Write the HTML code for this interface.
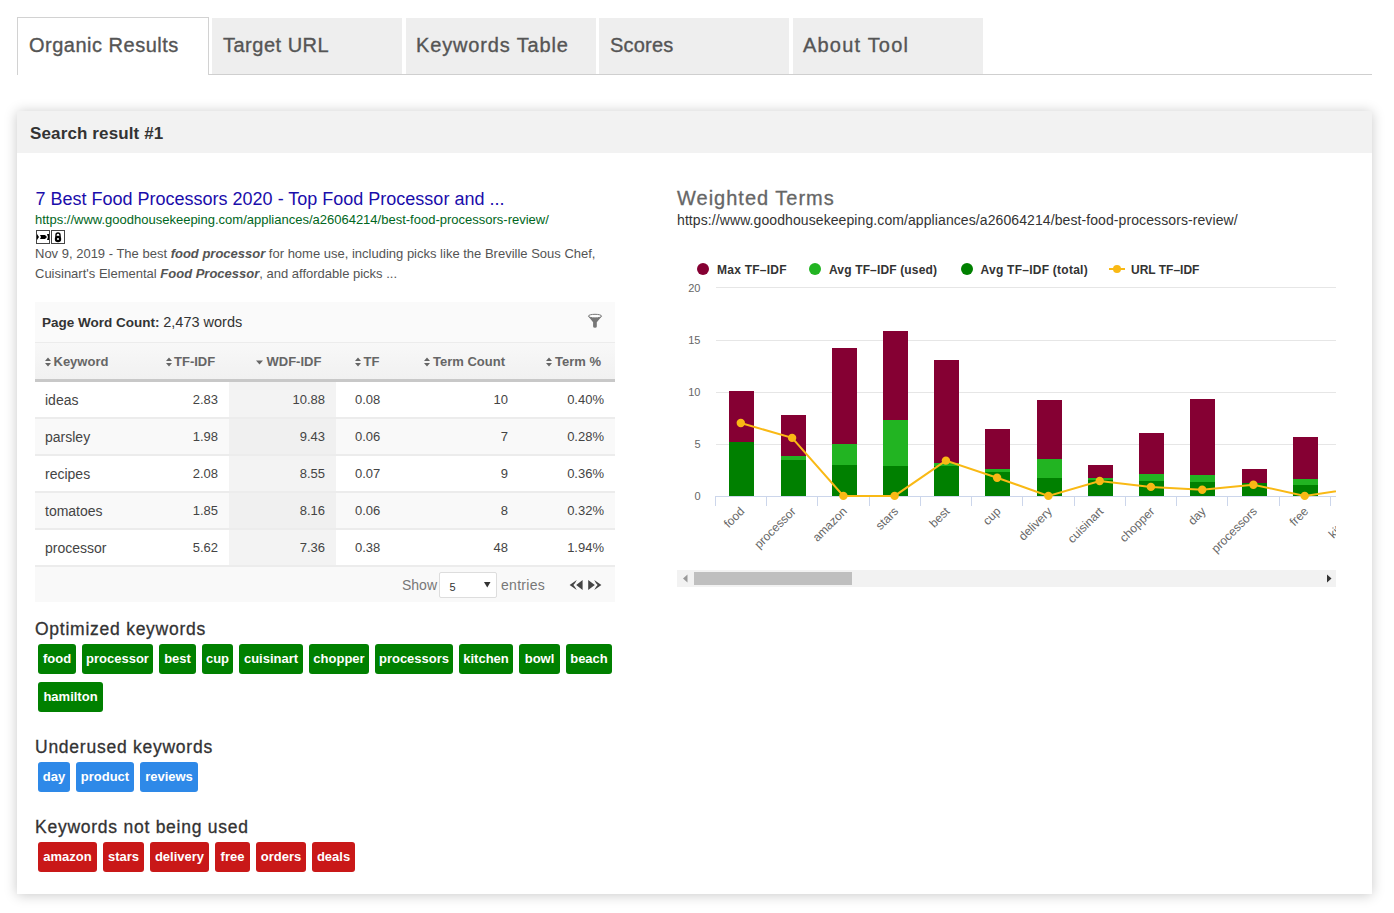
<!DOCTYPE html>
<html><head><meta charset="utf-8">
<style>
html,body{margin:0;padding:0;background:#fff;width:1394px;height:913px;overflow:hidden;}
body{font-family:"Liberation Sans",sans-serif;position:relative;color:#333;}
.a{position:absolute;white-space:nowrap;}
.tab{position:absolute;top:18px;height:56px;background:#eee;}
.tabt{position:absolute;top:31px;font-size:20px;line-height:28px;color:#555;letter-spacing:0.5px;-webkit-text-stroke:0.35px #555;}
#panel{position:absolute;left:17px;top:111px;width:1355px;height:783px;background:#fff;box-shadow:0 1px 12px rgba(0,0,0,0.22);}
#phead{position:absolute;left:0;top:0;width:1355px;height:42px;background:#f2f2f2;}
.t13{font-size:13px;line-height:16px;}
.th{position:absolute;top:355px;font-size:13px;line-height:14px;font-weight:bold;color:#666;}
.cell{position:absolute;font-size:13px;line-height:14px;color:#444;}
.r{text-align:right;}
.tag{position:absolute;height:30px;border-radius:3px;color:#fff;font-weight:bold;font-size:13px;line-height:30px;text-align:center;}
.g{background:#008000;}
.b{background:#2e89e8;}
.rd{background:#c91818;}
.h3{position:absolute;font-size:17.5px;line-height:20px;color:#333;letter-spacing:0.75px;-webkit-text-stroke:0.3px #333;}
</style></head>
<body>
<!-- tabs -->
<div class="a" style="left:17px;top:74px;width:1355px;height:1px;background:#cfcfcf"></div>
<div class="a" style="left:17px;top:17px;width:190px;height:57px;border:1px solid #d2d2d2;border-bottom:0;background:#fff"></div>
<div class="tab" style="left:212px;width:190px"></div>
<div class="tab" style="left:406px;width:190px"></div>
<div class="tab" style="left:599px;width:190px"></div>
<div class="tab" style="left:793px;width:190px"></div>
<div class="a tabt" style="left:29px">Organic Results</div>
<div class="a tabt" style="left:223px">Target URL</div>
<div class="a tabt" style="left:416px;letter-spacing:0.85px">Keywords Table</div>
<div class="a tabt" style="left:610px;letter-spacing:0.2px">Scores</div>
<div class="a tabt" style="left:803px;letter-spacing:1.2px">About Tool</div>

<div id="panel">
  <div id="phead"></div>
</div>
<div class="a" style="left:30px;top:124px;font-size:17px;line-height:20px;font-weight:bold;color:#333;letter-spacing:0.13px">Search result #1</div>

<!-- search result -->
<div class="a" style="left:35.5px;top:188px;font-size:18px;line-height:22px;color:#1a0dab">7 Best Food Processors 2020 - Top Food Processor and ...</div>
<div class="a" style="left:35px;top:212px;font-size:13px;line-height:16px;color:#006621">https://www.goodhousekeeping.com/appliances/a26064214/best-food-processors-review/</div>
<svg class="a" style="left:35px;top:230px" width="31" height="15" viewBox="0 0 31 15">
 <rect x="1.5" y="0.5" width="13" height="13" fill="#fff" stroke="#444" stroke-width="1"/>
 <rect x="16.5" y="0.5" width="13" height="13" fill="#fff" stroke="#444" stroke-width="1"/>
 <path d="M2 4 L4 7 L2 10 Z M5 5 L10 5 L12 7 L10 9 L5 9 L6 7 Z M12 4 L14 4 L14 10 L12 10 L13 7 Z" fill="#000"/>
 <circle cx="23" cy="9" r="3.2" fill="#000"/>
 <path d="M21 7 L21 5 A2 2 0 0 1 25 5 L25 7" fill="none" stroke="#000" stroke-width="1.4"/>
 <circle cx="23" cy="9" r="1" fill="#fff"/>
</svg>
<div class="a" style="left:35px;top:244px;font-size:13px;line-height:20px;color:#545454;white-space:normal;width:600px">Nov 9, 2019 - The best <b><i>food processor</i></b> for home use, including picks like the Breville Sous Chef,<br>Cuisinart's Elemental <b><i>Food Processor</i></b>, and affordable picks ...</div>

<!-- table -->
<div class="a" style="left:35px;top:302px;width:580px;height:40px;background:#fafafa"></div>
<div class="a" style="left:42px;top:314px;font-size:13.5px;line-height:16px;color:#333"><b>Page Word Count:</b> <span style="font-size:14.5px">2,473 words</span></div>
<svg class="a" style="left:587px;top:313px" width="16" height="16" viewBox="0 0 16 16">
 <path d="M1 3 Q8 7 15 3 L9.8 9.2 L9.8 13.4 Q9.8 14.7 8 14.7 Q6.1 14.7 6.1 13.4 L6.1 9.2 Z" fill="#777"/>
 <ellipse cx="8" cy="3.1" rx="6.6" ry="1.8" fill="#fff" stroke="#777" stroke-width="1"/>
</svg>
<div class="a" style="left:35px;top:342px;width:580px;height:1px;background:#ececec"></div>
<div class="a" style="left:35px;top:343px;width:580px;height:36px;background:linear-gradient(#f8f8f8,#f1f1f1)"></div>
<div class="a" style="left:35px;top:379px;width:580px;height:3px;background:#c8c8c8"></div>

<div class="a" style="left:35px;top:382px;width:580px;height:35px;background:#fff"></div>
<div class="a" style="left:229px;top:382px;width:107px;height:35px;background:#f3f3f3"></div>
<div class="a" style="left:35px;top:417px;width:580px;height:2px;background:#ececec"></div>
<div class="cell" style="left:45px;top:393px;font-size:14px">ideas</div>
<div class="cell r" style="left:118px;width:100px;top:393px">2.83</div>
<div class="cell r" style="left:225px;width:100px;top:393px">10.88</div>
<div class="cell" style="left:355px;top:393px">0.08</div>
<div class="cell r" style="left:408px;width:100px;top:393px">10</div>
<div class="cell r" style="left:504px;width:100px;top:393px">0.40%</div>
<div class="a" style="left:35px;top:419px;width:580px;height:35px;background:#f9f9f9"></div>
<div class="a" style="left:229px;top:419px;width:107px;height:35px;background:#f0f0f0"></div>
<div class="a" style="left:35px;top:454px;width:580px;height:2px;background:#ececec"></div>
<div class="cell" style="left:45px;top:430px;font-size:14px">parsley</div>
<div class="cell r" style="left:118px;width:100px;top:430px">1.98</div>
<div class="cell r" style="left:225px;width:100px;top:430px">9.43</div>
<div class="cell" style="left:355px;top:430px">0.06</div>
<div class="cell r" style="left:408px;width:100px;top:430px">7</div>
<div class="cell r" style="left:504px;width:100px;top:430px">0.28%</div>
<div class="a" style="left:35px;top:456px;width:580px;height:35px;background:#fff"></div>
<div class="a" style="left:229px;top:456px;width:107px;height:35px;background:#f3f3f3"></div>
<div class="a" style="left:35px;top:491px;width:580px;height:2px;background:#ececec"></div>
<div class="cell" style="left:45px;top:467px;font-size:14px">recipes</div>
<div class="cell r" style="left:118px;width:100px;top:467px">2.08</div>
<div class="cell r" style="left:225px;width:100px;top:467px">8.55</div>
<div class="cell" style="left:355px;top:467px">0.07</div>
<div class="cell r" style="left:408px;width:100px;top:467px">9</div>
<div class="cell r" style="left:504px;width:100px;top:467px">0.36%</div>
<div class="a" style="left:35px;top:493px;width:580px;height:35px;background:#f9f9f9"></div>
<div class="a" style="left:229px;top:493px;width:107px;height:35px;background:#f0f0f0"></div>
<div class="a" style="left:35px;top:528px;width:580px;height:2px;background:#ececec"></div>
<div class="cell" style="left:45px;top:504px;font-size:14px">tomatoes</div>
<div class="cell r" style="left:118px;width:100px;top:504px">1.85</div>
<div class="cell r" style="left:225px;width:100px;top:504px">8.16</div>
<div class="cell" style="left:355px;top:504px">0.06</div>
<div class="cell r" style="left:408px;width:100px;top:504px">8</div>
<div class="cell r" style="left:504px;width:100px;top:504px">0.32%</div>
<div class="a" style="left:35px;top:530px;width:580px;height:35px;background:#fff"></div>
<div class="a" style="left:229px;top:530px;width:107px;height:35px;background:#f3f3f3"></div>
<div class="a" style="left:35px;top:565px;width:580px;height:2px;background:#ececec"></div>
<div class="cell" style="left:45px;top:541px;font-size:14px">processor</div>
<div class="cell r" style="left:118px;width:100px;top:541px">5.62</div>
<div class="cell r" style="left:225px;width:100px;top:541px">7.36</div>
<div class="cell" style="left:355px;top:541px">0.38</div>
<div class="cell r" style="left:408px;width:100px;top:541px">48</div>
<div class="cell r" style="left:504px;width:100px;top:541px">1.94%</div>
<div class="a" style="left:35px;top:567px;width:580px;height:35px;background:#f9f9f9"></div>
<div class="cell" style="left:402px;top:578px;color:#777;font-size:14px">Show</div>
<div class="a" style="left:439px;top:572px;width:56px;height:24px;border:1px solid #ddd;border-radius:2px;background:#fff"></div>
<div class="cell" style="left:449.5px;top:580px;font-size:11px;color:#333">5</div>
<svg class="a" style="left:484px;top:581px" width="7" height="7"><path d="M0 1 L6.5 1 L3.25 6.5 Z" fill="#333"/></svg>
<div class="cell" style="left:501px;top:578px;color:#777;font-size:14px;letter-spacing:0.3px">entries</div>
<svg class="a" style="left:569px;top:580px" width="33" height="11" viewBox="0 0 33 11"><path d="M0.6 5 L7.8 0 Q6.6 2.6 4.4 5 Q6.6 7.4 7.8 10 Z M7.2 5 L13.6 0 L13.6 10 Z" fill="#444"/><path d="M19.2 0 L25.8 5 L19.2 10 Z M25.2 0 L32.4 5 L25.2 10 Q26.4 7.4 28.6 5 Q26.4 2.6 25.2 0 Z" fill="#444"/></svg>
<svg class="a" style="left:44.7px;top:357px" width="6" height="10" viewBox="0 0 6 10"><path d="M0 4 L3 0.5 L6 4 Z M0 6 L3 9.5 L6 6 Z" fill="#666"/></svg>
<div class="th" style="left:53.5px">Keyword</div>
<svg class="a" style="left:165.5px;top:357px" width="6" height="10" viewBox="0 0 6 10"><path d="M0 4 L3 0.5 L6 4 Z M0 6 L3 9.5 L6 6 Z" fill="#666"/></svg>
<div class="th" style="left:174px">TF-IDF</div>
<div class="th" style="left:266.5px">WDF-IDF</div>
<svg class="a" style="left:354.8px;top:357px" width="6" height="10" viewBox="0 0 6 10"><path d="M0 4 L3 0.5 L6 4 Z M0 6 L3 9.5 L6 6 Z" fill="#666"/></svg>
<div class="th" style="left:363.5px">TF</div>
<svg class="a" style="left:423.7px;top:357px" width="6" height="10" viewBox="0 0 6 10"><path d="M0 4 L3 0.5 L6 4 Z M0 6 L3 9.5 L6 6 Z" fill="#666"/></svg>
<div class="th" style="left:433px">Term Count</div>
<svg class="a" style="left:545.8px;top:357px" width="6" height="10" viewBox="0 0 6 10"><path d="M0 4 L3 0.5 L6 4 Z M0 6 L3 9.5 L6 6 Z" fill="#666"/></svg>
<div class="th" style="left:555px">Term %</div>
<svg class="a" style="left:256px;top:360px" width="7" height="5"><path d="M0 0.5 L7 0.5 L3.5 4.5 Z" fill="#666"/></svg>
<div class="h3" style="left:35px;top:619px">Optimized keywords</div>
<div class="tag g" style="left:38px;top:644px;width:38px">food</div>
<div class="tag g" style="left:82px;top:644px;width:71px">processor</div>
<div class="tag g" style="left:159px;top:644px;width:37px">best</div>
<div class="tag g" style="left:202px;top:644px;width:31px">cup</div>
<div class="tag g" style="left:239px;top:644px;width:64px">cuisinart</div>
<div class="tag g" style="left:309px;top:644px;width:60px">chopper</div>
<div class="tag g" style="left:375px;top:644px;width:78px">processors</div>
<div class="tag g" style="left:459px;top:644px;width:54px">kitchen</div>
<div class="tag g" style="left:519px;top:644px;width:41px">bowl</div>
<div class="tag g" style="left:566px;top:644px;width:46px">beach</div>
<div class="tag g" style="left:38px;top:682px;width:65px">hamilton</div>
<div class="h3" style="left:35px;top:737px">Underused keywords</div>
<div class="tag b" style="left:38px;top:762px;width:32px">day</div>
<div class="tag b" style="left:76px;top:762px;width:58px">product</div>
<div class="tag b" style="left:140px;top:762px;width:58px">reviews</div>
<div class="h3" style="left:35px;top:817px">Keywords not being used</div>
<div class="tag rd" style="left:38px;top:842px;width:59px">amazon</div>
<div class="tag rd" style="left:103px;top:842px;width:41px">stars</div>
<div class="tag rd" style="left:150px;top:842px;width:59px">delivery</div>
<div class="tag rd" style="left:215px;top:842px;width:35px">free</div>
<div class="tag rd" style="left:256px;top:842px;width:50px">orders</div>
<div class="tag rd" style="left:312px;top:842px;width:43px">deals</div>
<div class="a" style="left:677px;top:186px;font-size:20px;line-height:24px;color:#666;letter-spacing:1px;-webkit-text-stroke:0.3px #666">Weighted Terms</div>
<div class="a" style="left:677px;top:212px;font-size:14px;line-height:16px;color:#333;letter-spacing:0.09px">https://www.goodhousekeeping.com/appliances/a26064214/best-food-processors-review/</div>
<svg class="a" style="left:0;top:0" width="1394" height="913" viewBox="0 0 1394 913"><circle cx="703" cy="269" r="6" fill="#850033"/><circle cx="815" cy="269" r="6" fill="#22b422"/><circle cx="967" cy="269" r="6" fill="#008000"/><path d="M1109 269 L1125 269" stroke="#f9b915" stroke-width="2"/><circle cx="1117" cy="269" r="4" fill="#f9b915"/><text x="717" y="274" font-family="Liberation Sans" font-size="12" font-weight="bold" fill="#333" letter-spacing="0.25">Max TF–IDF</text><text x="829" y="274" font-family="Liberation Sans" font-size="12" font-weight="bold" fill="#333" letter-spacing="0.15">Avg TF–IDF (used)</text><text x="980.5" y="274" font-family="Liberation Sans" font-size="12" font-weight="bold" fill="#333" letter-spacing="0.25">Avg TF–IDF (total)</text><text x="1131" y="274" font-family="Liberation Sans" font-size="12" font-weight="bold" fill="#333">URL TF–IDF</text><rect x="716" y="287" width="620" height="1" fill="#e6e6e6"/><text x="700.5" y="292" text-anchor="end" font-family="Liberation Sans" font-size="11" fill="#666">20</text><rect x="716" y="340" width="620" height="1" fill="#e6e6e6"/><text x="700.5" y="344" text-anchor="end" font-family="Liberation Sans" font-size="11" fill="#666">15</text><rect x="716" y="392" width="620" height="1" fill="#e6e6e6"/><text x="700.5" y="396" text-anchor="end" font-family="Liberation Sans" font-size="11" fill="#666">10</text><rect x="716" y="444" width="620" height="1" fill="#e6e6e6"/><text x="700.5" y="448" text-anchor="end" font-family="Liberation Sans" font-size="11" fill="#666">5</text><text x="700.5" y="500" text-anchor="end" font-family="Liberation Sans" font-size="11" fill="#666">0</text><rect x="729" y="391" width="25" height="51" fill="#850033"/><rect x="729" y="442" width="25" height="54" fill="#008000"/><rect x="781" y="415" width="25" height="41" fill="#850033"/><rect x="781" y="456" width="25" height="4" fill="#22b422"/><rect x="781" y="460" width="25" height="36" fill="#008000"/><rect x="832" y="348" width="25" height="96" fill="#850033"/><rect x="832" y="444" width="25" height="21" fill="#22b422"/><rect x="832" y="465" width="25" height="31" fill="#008000"/><rect x="883" y="331" width="25" height="89" fill="#850033"/><rect x="883" y="420" width="25" height="46" fill="#22b422"/><rect x="883" y="466" width="25" height="30" fill="#008000"/><rect x="934" y="360" width="25" height="103" fill="#850033"/><rect x="934" y="463" width="25" height="3" fill="#22b422"/><rect x="934" y="466" width="25" height="30" fill="#008000"/><rect x="985" y="429" width="25" height="40" fill="#850033"/><rect x="985" y="469" width="25" height="3" fill="#22b422"/><rect x="985" y="472" width="25" height="24" fill="#008000"/><rect x="1037" y="400" width="25" height="59" fill="#850033"/><rect x="1037" y="459" width="25" height="19" fill="#22b422"/><rect x="1037" y="478" width="25" height="18" fill="#008000"/><rect x="1088" y="465" width="25" height="13" fill="#850033"/><rect x="1088" y="478" width="25" height="2" fill="#22b422"/><rect x="1088" y="480" width="25" height="16" fill="#008000"/><rect x="1139" y="433" width="25" height="41" fill="#850033"/><rect x="1139" y="474" width="25" height="7" fill="#22b422"/><rect x="1139" y="481" width="25" height="15" fill="#008000"/><rect x="1190" y="399" width="25" height="76" fill="#850033"/><rect x="1190" y="475" width="25" height="7" fill="#22b422"/><rect x="1190" y="482" width="25" height="14" fill="#008000"/><rect x="1242" y="469" width="25" height="14" fill="#850033"/><rect x="1242" y="483" width="25" height="13" fill="#008000"/><rect x="1293" y="437" width="25" height="42" fill="#850033"/><rect x="1293" y="479" width="25" height="6" fill="#22b422"/><rect x="1293" y="485" width="25" height="11" fill="#008000"/><rect x="715" y="496" width="621" height="1" fill="#ccd6eb"/><rect x="715" y="496" width="1" height="10" fill="#ccd6eb"/><rect x="766" y="496" width="1" height="10" fill="#ccd6eb"/><rect x="817" y="496" width="1" height="10" fill="#ccd6eb"/><rect x="869" y="496" width="1" height="10" fill="#ccd6eb"/><rect x="920" y="496" width="1" height="10" fill="#ccd6eb"/><rect x="971" y="496" width="1" height="10" fill="#ccd6eb"/><rect x="1022" y="496" width="1" height="10" fill="#ccd6eb"/><rect x="1074" y="496" width="1" height="10" fill="#ccd6eb"/><rect x="1125" y="496" width="1" height="10" fill="#ccd6eb"/><rect x="1176" y="496" width="1" height="10" fill="#ccd6eb"/><rect x="1227" y="496" width="1" height="10" fill="#ccd6eb"/><rect x="1279" y="496" width="1" height="10" fill="#ccd6eb"/><rect x="1330" y="496" width="1" height="10" fill="#ccd6eb"/><clipPath id="pc"><rect x="715" y="280" width="621" height="230"/></clipPath><g clip-path="url(#pc)"><polyline points="740.8,423.0 792.1,437.9 843.4,495.9 894.6,495.9 945.9,460.6 997.1,477.7 1048.4,495.9 1099.7,481.0 1150.9,486.9 1202.2,489.8 1253.4,484.7 1304.7,495.9 1356.0,488.1" fill="none" stroke="#f9b915" stroke-width="2"/><circle cx="740.8" cy="423.0" r="4.2" fill="#f9b915"/><circle cx="792.1" cy="437.9" r="4.2" fill="#f9b915"/><circle cx="843.4" cy="495.9" r="4.2" fill="#f9b915"/><circle cx="894.6" cy="495.9" r="4.2" fill="#f9b915"/><circle cx="945.9" cy="460.6" r="4.2" fill="#f9b915"/><circle cx="997.1" cy="477.7" r="4.2" fill="#f9b915"/><circle cx="1048.4" cy="495.9" r="4.2" fill="#f9b915"/><circle cx="1099.7" cy="481.0" r="4.2" fill="#f9b915"/><circle cx="1150.9" cy="486.9" r="4.2" fill="#f9b915"/><circle cx="1202.2" cy="489.8" r="4.2" fill="#f9b915"/><circle cx="1253.4" cy="484.7" r="4.2" fill="#f9b915"/><circle cx="1304.7" cy="495.9" r="4.2" fill="#f9b915"/></g><clipPath id="lc"><rect x="660" y="496" width="676" height="70"/></clipPath><g clip-path="url(#lc)"><text transform="translate(740.1,507) rotate(-45)" text-anchor="end" font-family="Liberation Sans" font-size="12" fill="#666" dy="0.6em" dx="0">food</text><text transform="translate(791.4,507) rotate(-45)" text-anchor="end" font-family="Liberation Sans" font-size="12" fill="#666" dy="0.6em" dx="0">processor</text><text transform="translate(842.6,507) rotate(-45)" text-anchor="end" font-family="Liberation Sans" font-size="12" fill="#666" dy="0.6em" dx="0">amazon</text><text transform="translate(893.9,507) rotate(-45)" text-anchor="end" font-family="Liberation Sans" font-size="12" fill="#666" dy="0.6em" dx="0">stars</text><text transform="translate(945.2,507) rotate(-45)" text-anchor="end" font-family="Liberation Sans" font-size="12" fill="#666" dy="0.6em" dx="0">best</text><text transform="translate(996.4,507) rotate(-45)" text-anchor="end" font-family="Liberation Sans" font-size="12" fill="#666" dy="0.6em" dx="0">cup</text><text transform="translate(1047.7,507) rotate(-45)" text-anchor="end" font-family="Liberation Sans" font-size="12" fill="#666" dy="0.6em" dx="0">delivery</text><text transform="translate(1099.0,507) rotate(-45)" text-anchor="end" font-family="Liberation Sans" font-size="12" fill="#666" dy="0.6em" dx="0">cuisinart</text><text transform="translate(1150.2,507) rotate(-45)" text-anchor="end" font-family="Liberation Sans" font-size="12" fill="#666" dy="0.6em" dx="0">chopper</text><text transform="translate(1201.5,507) rotate(-45)" text-anchor="end" font-family="Liberation Sans" font-size="12" fill="#666" dy="0.6em" dx="0">day</text><text transform="translate(1252.7,507) rotate(-45)" text-anchor="end" font-family="Liberation Sans" font-size="12" fill="#666" dy="0.6em" dx="0">processors</text><text transform="translate(1304.0,507) rotate(-45)" text-anchor="end" font-family="Liberation Sans" font-size="12" fill="#666" dy="0.6em" dx="0">free</text><text transform="translate(1355.2,507) rotate(-45)" text-anchor="end" font-family="Liberation Sans" font-size="12" fill="#666" dy="0.6em" dx="0">kitchen</text></g><rect x="677" y="570" width="659" height="17" fill="#f2f2f2"/><rect x="694" y="572" width="158" height="13" fill="#bfbfbf"/><path d="M683 578.5 L687.5 574.5 L687.5 582.5 Z" fill="#999"/><path d="M1331.5 578.5 L1327 574.5 L1327 582.5 Z" fill="#333"/></svg>
</body></html>
